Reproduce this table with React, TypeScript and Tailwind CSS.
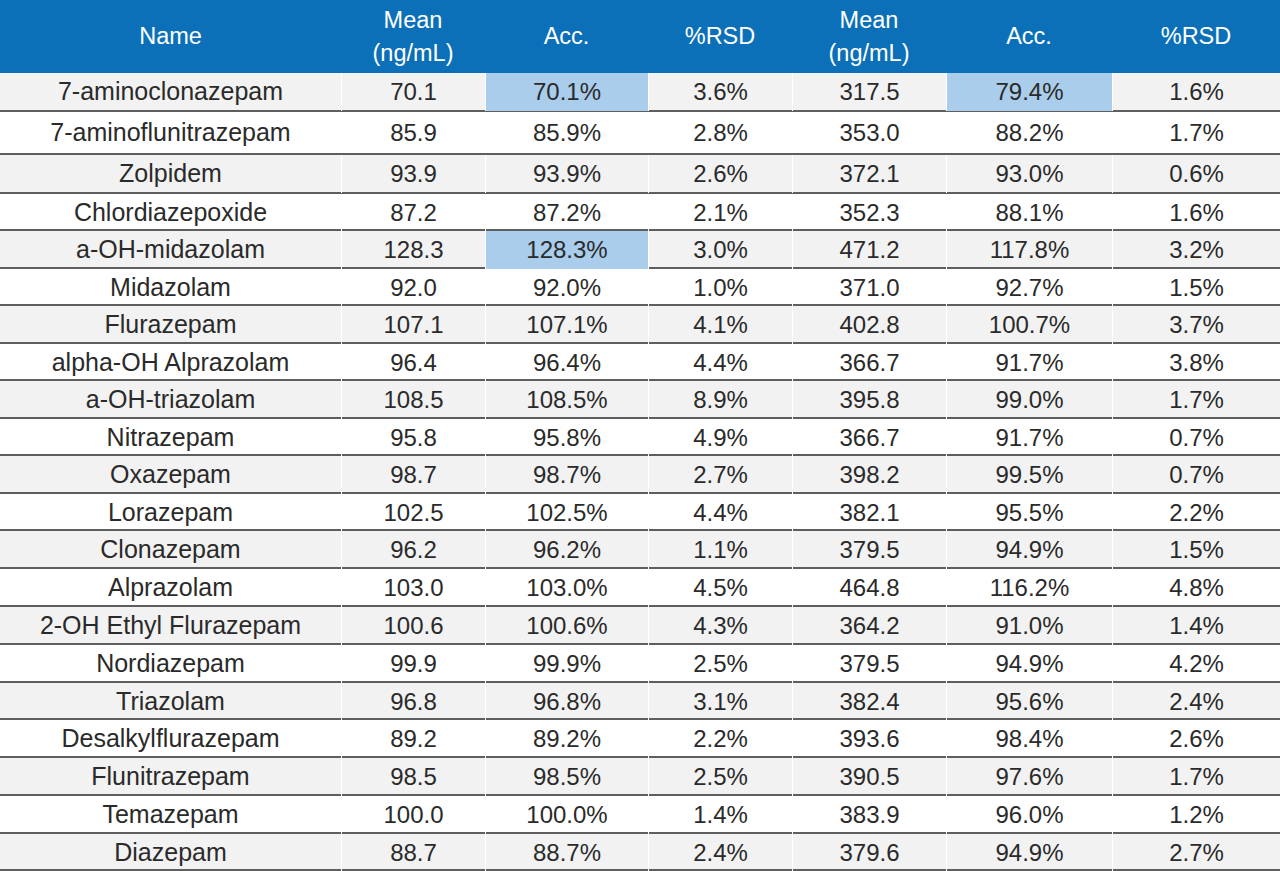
const rows: [string, string, string, string, string, string, string][] = [
  ['7-aminoclonazepam', '70.1', '70.1%', '3.6%', '317.5', '79.4%', '1.6%'],
  ['7-aminoflunitrazepam', '85.9', '85.9%', '2.8%', '353.0', '88.2%', '1.7%'],
  ['Zolpidem', '93.9', '93.9%', '2.6%', '372.1', '93.0%', '0.6%'],
  ['Chlordiazepoxide', '87.2', '87.2%', '2.1%', '352.3', '88.1%', '1.6%'],
  ['a-OH-midazolam', '128.3', '128.3%', '3.0%', '471.2', '117.8%', '3.2%'],
  ['Midazolam', '92.0', '92.0%', '1.0%', '371.0', '92.7%', '1.5%'],
  ['Flurazepam', '107.1', '107.1%', '4.1%', '402.8', '100.7%', '3.7%'],
  ['alpha-OH Alprazolam', '96.4', '96.4%', '4.4%', '366.7', '91.7%', '3.8%'],
  ['a-OH-triazolam', '108.5', '108.5%', '8.9%', '395.8', '99.0%', '1.7%'],
  ['Nitrazepam', '95.8', '95.8%', '4.9%', '366.7', '91.7%', '0.7%'],
  ['Oxazepam', '98.7', '98.7%', '2.7%', '398.2', '99.5%', '0.7%'],
  ['Lorazepam', '102.5', '102.5%', '4.4%', '382.1', '95.5%', '2.2%'],
  ['Clonazepam', '96.2', '96.2%', '1.1%', '379.5', '94.9%', '1.5%'],
  ['Alprazolam', '103.0', '103.0%', '4.5%', '464.8', '116.2%', '4.8%'],
  ['2-OH Ethyl Flurazepam', '100.6', '100.6%', '4.3%', '364.2', '91.0%', '1.4%'],
  ['Nordiazepam', '99.9', '99.9%', '2.5%', '379.5', '94.9%', '4.2%'],
  ['Triazolam', '96.8', '96.8%', '3.1%', '382.4', '95.6%', '2.4%'],
  ['Desalkylflurazepam', '89.2', '89.2%', '2.2%', '393.6', '98.4%', '2.6%'],
  ['Flunitrazepam', '98.5', '98.5%', '2.5%', '390.5', '97.6%', '1.7%'],
  ['Temazepam', '100.0', '100.0%', '1.4%', '383.9', '96.0%', '1.2%'],
  ['Diazepam', '88.7', '88.7%', '2.4%', '379.6', '94.9%', '2.7%'],
];

// the source table has uneven row heights near the top
const rowH = [
  'h-[39px]', 'h-[43px]', 'h-[39px]', 'h-[37px]', 'h-[38px]', 'h-[37px]', 'h-[38px]',
  'h-[37px]', 'h-[38px]', 'h-[37px]', 'h-[38px]', 'h-[37px]', 'h-[38px]', 'h-[38px]',
  'h-[38px]', 'h-[38px]', 'h-[37px]', 'h-[38px]', 'h-[38px]', 'h-[38px]', 'h-[37px]',
];

// cells flagged in the source (row index -> column indexes)
const flagged: Record<number, number[]> = {
  0: [2, 5],
  4: [2],
};

const cols = 'grid grid-cols-[341px_144px_163px_144px_154px_166px_168px]';

export default function App() {
  return (
    <div className="w-[1280px] bg-white font-['Liberation_Sans',Arial,sans-serif]">
      <div className={`${cols} h-[73px] bg-[#0b70b8] text-white text-[23.5px] leading-[33px]`}>
        {['Name', 'Mean\n(ng/mL)', 'Acc.', '%RSD', 'Mean\n(ng/mL)', 'Acc.', '%RSD'].map((h, i) => (
          <div key={i} className="flex items-center justify-center text-center whitespace-pre-line">
            {h}
          </div>
        ))}
      </div>

      {rows.map((r, ri) => (
        <div
          key={ri}
          className={`${cols} ${rowH[ri]} border-b-2 border-[#5e5e5e] text-[#2a2a2a] ${
            ri % 2 === 0 ? 'bg-[#f2f2f2]' : 'bg-white'
          }`}
        >
          {r.map((c, ci) => (
            <div
              key={ci}
              className={`flex items-center justify-center ${ci === 0 ? 'text-[25px]' : 'text-[24px] border-l border-white'} ${
                flagged[ri]?.includes(ci) ? 'bg-[#a9cdea]' : ''
              }`}
            >
              {c}
            </div>
          ))}
        </div>
      ))}
    </div>
  );
}
